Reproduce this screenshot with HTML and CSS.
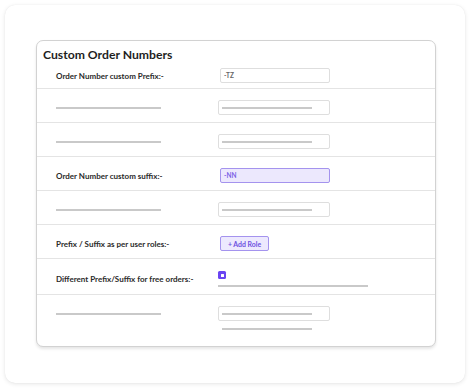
FILE: index.html
```html
<!DOCTYPE html>
<html>
<head>
<meta charset="utf-8">
<link rel="stylesheet" href="styles.css">
</head>
<body>
<div class="outer">
  <div class="card">
    <h1 class="title">Custom Order Numbers</h1>
    <div class="row row-first">
      <div class="label">Order Number custom Prefix:-</div>
      <div class="ctrl"><div class="input text">-TZ</div></div>
    </div>
    <div class="row">
      <div class="label"><span class="ph-label"></span></div>
      <div class="ctrl"><div class="input ph"><span class="ph-inner"></span></div></div>
    </div>
    <div class="row">
      <div class="label"><span class="ph-label"></span></div>
      <div class="ctrl"><div class="input ph"><span class="ph-inner"></span></div></div>
    </div>
    <div class="row">
      <div class="label">Order Number custom suffix:-</div>
      <div class="ctrl"><div class="input text active">-NN</div></div>
    </div>
    <div class="row">
      <div class="label"><span class="ph-label"></span></div>
      <div class="ctrl"><div class="input ph"><span class="ph-inner"></span></div></div>
    </div>
    <div class="row">
      <div class="label">Prefix / Suffix as per user roles:-</div>
      <div class="ctrl"><button class="add-role">+ Add Role</button></div>
    </div>
    <div class="row row-check">
      <div class="label">Different Prefix/Suffix for free orders:-</div>
      <div class="ctrl ctrl-col">
        <span class="check"></span>
        <span class="ph-long"></span>
      </div>
    </div>
    <div class="row row-last">
      <div class="label"><span class="ph-label"></span></div>
      <div class="ctrl ctrl-col">
        <div class="input ph"><span class="ph-inner"></span></div>
        <span class="ph-under"></span>
      </div>
    </div>
  </div>
</div>
</body>
</html>
```

FILE: styles.css
```css
* { box-sizing: border-box; }
html, body { margin: 0; padding: 0; background: #ffffff; }
body {
  font-family: Lato, "Liberation Sans", sans-serif;
  width: 474px;
  height: 390px;
  overflow: hidden;
  padding: 5px 9px 0 5px;
}
.outer {
  width: 460px;
  height: 378px;
  background: #ffffff;
  border-radius: 10px;
  box-shadow: 0 1px 4px rgba(0,0,0,0.10), 0 0 1px rgba(0,0,0,0.08);
  padding: 35px 29px 0 31px;
}
.card {
  width: 400px;
  height: 307px;
  border: 1px solid #d2d2d2;
  border-radius: 7px;
  box-shadow: 0 2px 3px rgba(0,0,0,0.10);
  background: #fff;
  overflow: hidden;
}
.title {
  margin: 0;
  padding: 6px 0 0 6px;
  font-size: 12.2px;
  line-height: 16px;
  font-weight: 700;
  color: #1e1e1e;
}
.row {
  display: grid;
  grid-template-columns: 181px 1fr;
  align-items: center;
  height: 34px;
  padding-top: 4px;
  border-bottom: 1px solid #e4e4e4;
}
.row-first {
  height: 26px;
  padding-top: 0;
}
.row-check {
  height: 36px;
  padding-top: 4px;
  align-items: start;
}
.row-last {
  height: 52px;
  border-bottom: none;
  align-items: start;
  padding-top: 11px;
}
.label {
  padding-left: 19px;
  font-size: 8px;
  font-weight: 700;
  color: #2a2a2a;
  line-height: 10px;
  display: flex;
  align-items: center;
}
.row-check .label { padding-top: 11px; }
.row-last .label { padding-top: 3px; }
.ph-label {
  display: block;
  width: 105px;
  height: 2px;
  background: #c9c9c9;
  margin: 4px 0;
}
.ctrl { display: flex; align-items: center; }
.ctrl-col { flex-direction: column; align-items: flex-start; }
.input {
  width: 112px;
  height: 15px;
  border: 1px solid #dedede;
  border-radius: 2px;
  background: #fff;
  display: flex;
  align-items: center;
}
.input.text {
  margin-left: 2px;
  width: 110px;
  padding-left: 3px;
  font-size: 6.5px;
  font-weight: 700;
  color: #666;
}
.input.active {
  background: #ece8fd;
  border-color: #a493ee;
  color: #7b62e6;
}
.input.ph { padding-left: 3px; }
.ph-inner {
  display: block;
  width: 90px;
  height: 2px;
  background: #c9c9c9;
}
.add-role {
  margin-left: 2px;
  height: 15px;
  width: 49px;
  padding: 0;
  border: 1px solid #a493ee;
  border-radius: 2px;
  background: #ede9fe;
  color: #6c50e0;
  font-family: Lato, "Liberation Sans", sans-serif;
  font-size: 6.9px;
  font-weight: 700;
}
.check {
  display: flex;
  align-items: center;
  justify-content: center;
  margin-top: 8px;
  width: 8px;
  height: 8px;
  border-radius: 1.5px;
  background: #6a45f2;
}
.check::after {
  content: "";
  width: 3px;
  height: 3px;
  background: #fff;
  border-radius: 0.5px;
}
.ph-long {
  display: block;
  margin-top: 6px;
  width: 150px;
  height: 2px;
  background: #c9c9c9;
}
.ph-under {
  display: block;
  margin-top: 7px;
  margin-left: 4px;
  width: 90px;
  height: 2px;
  background: #c9c9c9;
}
```
